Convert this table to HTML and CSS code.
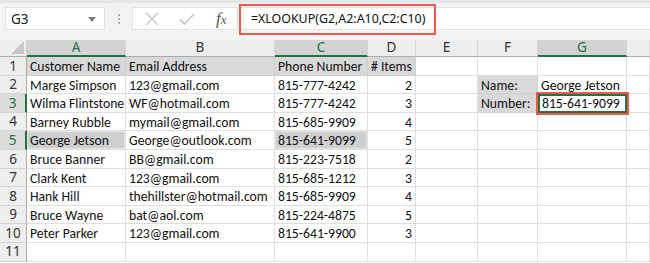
FILE: index.html
```html
<!DOCTYPE html>
<html>
<head>
<meta charset="utf-8">
<link rel="stylesheet" href="styles.css">
</head>
<body>
<div class="app">
  <div class="toolbar">
    <div class="namebox">
      <span class="name">G3</span>
      <svg class="caret" width="8" height="5" viewBox="0 0 8 5"><path d="M0 0H8L4 5Z" fill="#7a7a7a"/></svg>
    </div>
    <div class="dots"><span></span><span></span><span></span></div>
    <div class="fxbox">
      <svg class="ico" width="16" height="16" viewBox="0 0 16 16"><path d="M2 2L14 14M14 2L2 14" stroke="#c4c4c4" stroke-width="1.4" fill="none"/></svg>
      <svg class="ico" width="18" height="16" viewBox="0 0 18 16"><path d="M2 8.5L6.5 13L16 3" stroke="#c4c4c4" stroke-width="1.6" fill="none"/></svg>
      <span class="fx">f<span class="fxx">x</span></span>
    </div>
    <div class="formula">
      <span class="ftext">=XLOOKUP(G2,A2:A10,C2:C10)</span>
    </div>
  </div>
  <div class="gap"></div>
  <div class="sheet">
    <div class="corner"><svg width="13" height="13" viewBox="0 0 13 13"><path d="M13 0V13H0Z" fill="#c8c8c8"/></svg></div>
    <div class="ch sel">A</div><div class="ch">B</div><div class="ch sel">C</div><div class="ch">D</div><div class="ch">E</div><div class="ch">F</div><div class="ch sel">G</div><div class="ch last"></div>

    <div class="rh">1</div>
    <div class="c fill">Customer Name</div><div class="c fill">Email Address</div><div class="c fill">Phone Number</div><div class="c fill">#&nbsp;Items</div><div class="c"></div><div class="c"></div><div class="c"></div><div class="c"></div>

    <div class="rh">2</div>
    <div class="c">Marge Simpson</div><div class="c">123@gmail.com</div><div class="c">815-777-4242</div><div class="c num">2</div><div class="c"></div><div class="c fill">Name:</div><div class="c">George Jetson</div><div class="c"></div>

    <div class="rh sel">3</div>
    <div class="c">Wilma Flintstone</div><div class="c">WF@hotmail.com</div><div class="c">815-777-4242</div><div class="c num">3</div><div class="c"></div><div class="c fill">Number:</div><div class="c active">815-641-9099</div><div class="c"></div>

    <div class="rh">4</div>
    <div class="c">Barney Rubble</div><div class="c">mymail@gmail.com</div><div class="c">815-685-9909</div><div class="c num">4</div><div class="c"></div><div class="c"></div><div class="c"></div><div class="c"></div>

    <div class="rh sel">5</div>
    <div class="c hl">George Jetson</div><div class="c">George@outlook.com</div><div class="c hl">815-641-9099</div><div class="c num">5</div><div class="c"></div><div class="c"></div><div class="c"></div><div class="c"></div>

    <div class="rh">6</div>
    <div class="c">Bruce Banner</div><div class="c">BB@gmail.com</div><div class="c">815-223-7518</div><div class="c num">2</div><div class="c"></div><div class="c"></div><div class="c"></div><div class="c"></div>

    <div class="rh">7</div>
    <div class="c">Clark Kent</div><div class="c">123@gmail.com</div><div class="c">815-685-1212</div><div class="c num">3</div><div class="c"></div><div class="c"></div><div class="c"></div><div class="c"></div>

    <div class="rh">8</div>
    <div class="c">Hank Hill</div><div class="c">thehillster@hotmail.com</div><div class="c">815-685-9909</div><div class="c num">4</div><div class="c"></div><div class="c"></div><div class="c"></div><div class="c"></div>

    <div class="rh">9</div>
    <div class="c">Bruce Wayne</div><div class="c">bat@aol.com</div><div class="c">815-224-4875</div><div class="c num">5</div><div class="c"></div><div class="c"></div><div class="c"></div><div class="c"></div>

    <div class="rh">10</div>
    <div class="c">Peter Parker</div><div class="c">123@gmail.com</div><div class="c">815-641-9900</div><div class="c num">3</div><div class="c"></div><div class="c"></div><div class="c"></div><div class="c"></div>

    <div class="rh">11</div>
    <div class="c"></div><div class="c"></div><div class="c"></div><div class="c"></div><div class="c"></div><div class="c"></div><div class="c"></div><div class="c"></div>
  </div>
</div>
</body>
</html>
```
FILE: styles.css
```css
* { box-sizing: border-box; }
html, body { margin: 0; padding: 0; background: #fff; }
.app { width: 650px; height: 263px; overflow: hidden; }

.toolbar {
  height: 33px;
  background: #f3f3f3;
  border-top: 3px solid #e6e6e6;
  display: flex;
  align-items: flex-start;
  padding-top: 4px;
  font-family: "Noto Sans", "Open Sans", sans-serif;
}
.namebox {
  width: 100px;
  height: 23px;
  margin-left: 5px;
  background: #fff;
  border: 1px solid #e2e2e2;
  display: flex;
  align-items: center;
  justify-content: space-between;
  padding: 0 8px 0 5px;
}
.name { font-size: 13.5px; color: #222; }
.caret { margin-top: 1px; }
.dots {
  width: 27px;
  height: 23px;
  display: flex;
  flex-direction: column;
  align-items: center;
  justify-content: center;
  gap: 2px;
}
.dots span { width: 2px; height: 2px; background: #b0b0b0; display: block; }
.fxbox {
  width: 106px;
  height: 23px;
  background: #fff;
  border: 1px solid #e2e2e2;
  display: flex;
  align-items: center;
  padding-left: 11px;
  gap: 18px;
}
.fx {
  font-family: "Liberation Serif", serif;
  font-style: italic;
  font-size: 17px;
  color: #555;
  margin-left: 2px;
}
.fxx { font-size: 13px; }
.formula {
  flex: 1;
  height: 23px;
  margin-left: 2px;
  background: #fff;
  border: 1px solid #e2e2e2;
  border-right: none;
  display: flex;
  align-items: center;
  padding-left: 10px;
  position: relative;
}
.formula::after {
  content: "";
  position: absolute;
  left: -2px;
  top: -4px;
  width: 193px;
  height: 27px;
  border: 2px solid #ec5a4e;
}
.ftext { font-size: 12.4px; color: #111; }

.gap { height: 7px; background: #f3f3f3; }

.sheet {
  display: grid;
  grid-template-columns: 27px 99px 149px 93px 48px 62px 60px 89px 23px;
  grid-template-rows: 17px repeat(11, 18.6px);
  font-family: "Carlito", "Lato", sans-serif;
  font-size: 13.7px;
  color: #111;
}
.corner {
  background: #eeeeee;
  border-right: 1px solid #d0d0d0;
  border-bottom: 1px solid #ababab;
  display: flex;
  align-items: flex-end;
  justify-content: flex-end;
  padding: 0 2px 2px 0;
}
.corner svg { display: block; }
.ch {
  background: #eeeeee;
  border-right: 1px solid #d5d5d5;
  border-bottom: 1px solid #ababab;
  font-family: "Noto Sans", "Open Sans", sans-serif;
  font-size: 13.5px;
  color: #333;
  display: flex;
  align-items: center;
  justify-content: center;
  line-height: 1;
}
.ch.sel {
  background: #d3d3d3;
  color: #217346;
  border-bottom: 2px solid #217346;
}
.rh {
  background: #eeeeee;
  border-right: 1px solid #ababab;
  border-bottom: 1px solid #d5d5d5;
  font-family: "Noto Sans", "Open Sans", sans-serif;
  font-size: 13.5px;
  color: #333;
  display: flex;
  align-items: center;
  justify-content: center;
  line-height: 1;
  padding-top: 1px;
}
.rh.sel {
  background: #dcdcdc;
  color: #217346;
  border-right: 2px solid #217346;
}
.c {
  border-right: 1px solid #dedede;
  border-bottom: 1px solid #dedede;
  padding: 2px 3px 0;
  display: flex;
  align-items: center;
  white-space: nowrap;
  overflow: visible;
  line-height: 1;
}
.c.fill { background: #d9d9d9; border-color: #d9d9d9 #cfcfcf #cfcfcf #d9d9d9; }
.c.num { justify-content: flex-end; }
.c.hl {
  background: #cfcfcf;
  box-shadow: inset 0 0 0 1px #e4e4e4;
}
.c.active {
  position: relative;
  border: 2px solid #217346;
  padding-left: 2px;
  padding-top: 1px;
}
.c.active::after {
  content: "";
  position: absolute;
  left: -4px;
  top: -4px;
  right: -4px;
  bottom: -4px;
  border: 2px solid #ec5a4e;
}
```
